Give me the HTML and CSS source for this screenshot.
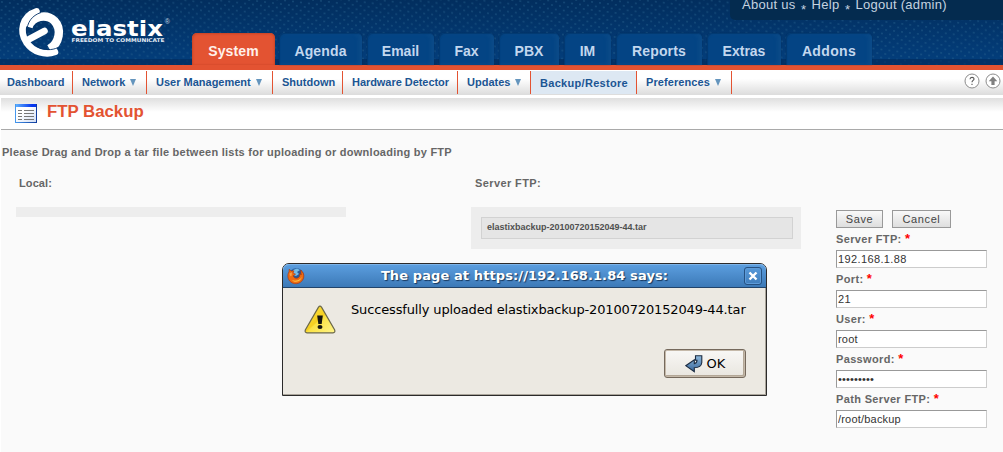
FILE: index.html
```html
<!DOCTYPE html>
<html lang="en">
<head>
<meta charset="utf-8">
<title>Elastix - FTP Backup</title>
<link rel="stylesheet" href="styles.css">
</head>
<body>
<header class="header">
  <svg class="dots" width="1003" height="65" aria-hidden="true">
    <defs>
      <pattern id="dot-a" width="8" height="8" patternUnits="userSpaceOnUse" patternTransform="rotate(7) skewX(5)">
        <rect x="1" y="1" width="2" height="1.5" fill="#2a6590"/>
        <rect x="5" y="5" width="2" height="1.5" fill="#2a6590"/>
      </pattern>
    </defs>
    <rect width="1003" height="65" fill="url(#dot-a)" opacity=".45"/>
    <rect y="59" width="1003" height="6" fill="#022b5c" opacity=".65"/>
  </svg>
  <svg class="logo" width="160" height="60" viewBox="14 0 160 60" role="img" aria-label="elastix">
    <path d="M28.5 27C32 15.500 47 13.500 54.500 21C62 29 59.500 43 49.500 49" fill="none" stroke="#fff" stroke-width="8.500"/>
    <path d="M36.500 11.300C22 16 19 32 26.500 42.500C33 52 45 55.500 55 52" fill="none" stroke="#fff" stroke-width="6.600" stroke-linecap="round"/>
    <path d="M41 12.500C32 15.500 27 22 26.500 33" fill="none" stroke="#043268" stroke-width=".9"/>
    <path d="M58 47.500C52 50.500 44 50.500 37 46.500" fill="none" stroke="#043268" stroke-width=".9"/>
    <path d="M29.500 39L44.500 31" stroke="#fff" stroke-width="6.600" stroke-linecap="round"/>
    <text class="logo-name" x="71" y="36" textLength="92" lengthAdjust="spacingAndGlyphs">elastix</text>
    <text class="logo-tag" x="71.5" y="41.8" textLength="93" lengthAdjust="spacingAndGlyphs">FREEDOM TO COMMUNICATE</text>
    <text class="logo-mark" x="164.8" y="24">®</text>
  </svg>
  <nav class="tabs">
    <a class="tab tab-system active">System</a>
    <a class="tab tab-agenda">Agenda</a>
    <a class="tab tab-email">Email</a>
    <a class="tab tab-fax">Fax</a>
    <a class="tab tab-pbx">PBX</a>
    <a class="tab tab-im">IM</a>
    <a class="tab tab-reports">Reports</a>
    <a class="tab tab-extras">Extras</a>
    <a class="tab tab-addons">Addons</a>
  </nav>
  <div class="account"><a>About us</a><i>*</i><a>Help</a><i>*</i><a>Logout (admin)</a></div>
</header>
<nav class="submenu">
  <a class="sub sub-dashboard">Dashboard</a>
  <a class="sub sub-network">Network<b></b></a>
  <a class="sub sub-users">User Management<b></b></a>
  <a class="sub sub-shutdown">Shutdown</a>
  <a class="sub sub-hardware">Hardware Detector</a>
  <a class="sub sub-updates">Updates<b></b></a>
  <a class="sub sub-backup current">Backup/Restore</a>
  <a class="sub sub-prefs">Preferences<b></b></a>
  <span class="tools">
    <svg width="16" height="16" viewBox="0 0 16 16"><circle cx="8" cy="8" r="7" fill="#fff" stroke="#8c8c8c"/><path d="M6 6.2C6 3.8 10 3.8 10 6C10 7.4 8 7.5 8 9.3M8 10.7V12" fill="none" stroke="#555" stroke-width="1.1"/></svg>
    <svg width="16" height="16" viewBox="0 0 16 16"><circle cx="8" cy="8" r="7" fill="#fff" stroke="#8c8c8c"/><path d="M8 3.5L12.3 8.3H9.6V12H6.4V8.3H3.7Z" fill="#808080"/></svg>
  </span>
</nav>
<main class="page">
  <h1 class="title">
    <svg width="22" height="19" viewBox="0 0 22 19">
      <defs>
        <linearGradient id="bar"><stop offset="0" stop-color="#5fb0ff"/><stop offset=".8" stop-color="#0636ee"/></linearGradient>
        <linearGradient id="frame"><stop offset="0" stop-color="#4698ee"/><stop offset="1" stop-color="#103c9c"/></linearGradient>
        <linearGradient id="sheet" x2="1" y2="1"><stop offset=".4" stop-color="#fff"/><stop offset="1" stop-color="#cfdcf3"/></linearGradient>
      </defs>
      <rect x=".5" y=".5" width="21" height="18" fill="url(#sheet)" stroke="url(#frame)"/>
      <rect x="1" y="0" width="20" height="3" fill="url(#bar)"/>
      <path d="M3 6.5H7M3 9.5H7M3 12.5H7M3 15.5H7M9 6.5H19M9 9.5H19M9 12.5H19M9 15.5H19" stroke="#777"/>
    </svg>
    <span>FTP Backup</span>
  </h1>
  <p class="hint">Please Drag and Drop a tar file between lists for uploading or downloading by FTP</p>
  <div class="columns">
    <section class="col col-local">
      <h2 class="label">Local:</h2>
      <div class="list"></div>
    </section>
    <section class="col col-server">
      <h2 class="label">Server FTP:</h2>
      <div class="list"><div class="file"><span>elastixbackup-20100720152049-44.tar</span></div></div>
    </section>
    <form class="form">
      <div class="buttons"><button type="button" class="btn btn-save">Save</button><button type="button" class="btn btn-cancel">Cancel</button></div>
      <label class="field"><span class="name">Server FTP: <em>*</em></span><input value="192.168.1.88"></label>
      <label class="field"><span class="name">Port: <em>*</em></span><input value="21"></label>
      <label class="field"><span class="name">User: <em>*</em></span><input class="tight" value="root"></label>
      <label class="field"><span class="name">Password: <em>*</em></span><input class="secret" value="•••••••••"></label>
      <label class="field"><span class="name">Path Server FTP: <em>*</em></span><input class="tight" value="/root/backup"></label>
    </form>
  </div>
</main>
<div class="dialog">
  <div class="dialog-bar">
    <svg width="18" height="18" viewBox="0 0 18 18">
      <circle cx="9.3" cy="8.7" r="7.5" fill="#275999"/>
      <path d="M6 3L10 1.5L13 3L10 5L12 7L9 9L6 8Z" fill="#75bde7"/>
      <path d="M2.2 2.2L4.2 4.1L7 3.8L6 6L8.5 7.2L6.2 8.7C6.6 11.5 10.5 12.3 12.5 9.5L12.9 6.5L14.2 8L13.8 3.2C16.5 5.2 17.3 8 16.6 10.8C15 16.5 8.5 18.3 4 15.2C.4 12.5.1 7.7 2 4.8Z" fill="#ed6b12" stroke="#ae3106" stroke-width=".6"/>
      <path d="M15.500 7C15.500 12 10.500 14.800 5 13.200C9 16.500 15 14.500 15.500 7Z" fill="#ffc542"/>
      <path d="M2.5 6.5L5 5.2L4.5 9C3.5 9.5 2.7 8.5 2.5 6.5Z" fill="#f5a34a"/>
    </svg>
    <span class="dialog-title">The page at https://192.168.1.84 says:</span>
    <span class="close"><svg width="12" height="12" viewBox="0 0 12 12"><path d="M2.500 2.500L9.500 9.500M9.500 2.500L2.500 9.500" stroke="#fff" stroke-width="2.400"/></svg></span>
  </div>
  <div class="dialog-body">
    <svg width="32" height="29" viewBox="0 0 32 29">
      <defs><linearGradient id="warn" x2="1" y2="1"><stop offset="0" stop-color="#ffe84c"/><stop offset=".48" stop-color="#f5cf20"/><stop offset=".52" stop-color="#fbe244"/><stop offset="1" stop-color="#fff58c"/></linearGradient></defs>
      <path d="M14.5 2.2Q16 .2 17.5 2.2L30.7 25Q31.5 27.6 29 27.8H3Q.5 27.6 1.3 25Z" fill="url(#warn)" stroke="#6b6848" stroke-width="1.2"/>
      <path d="M13.2 10.500H18.8L17.700 19H14.300Z" fill="#151510"/><ellipse cx="16" cy="22" rx="2.5" ry="2" fill="#151510"/>
    </svg>
    <span class="message">Successfully uploaded elastixbackup-20100720152049-44.tar</span>
    <button type="button" class="ok">
      <svg width="18" height="18" viewBox="0 0 18 18">
        <defs><linearGradient id="enter" x2="0" y2="1"><stop offset="0" stop-color="#8fb9dc"/><stop offset="1" stop-color="#36659a"/></linearGradient></defs>
        <path d="M10.500 .700H16.800V7.500Q16.300 12.700 9.300 12.700V16.800L.8 10.700L9.300 4.800V8.700Q12 8.300 12 5.200H10.500Z" fill="url(#enter)" stroke="#1c2c42" stroke-width="1.1"/>
      </svg>
      <span>OK</span>
    </button>
  </div>
</div>
</body>
</html>
```

FILE: styles.css
```css
* { box-sizing: border-box; }
body {
  margin: 0;
  width: 1003px;
  height: 452px;
  overflow: hidden;
  background: #fff;
  font-family: "Liberation Sans", Arial, sans-serif;
  position: relative;
}

/* Header */
.header {
  position: relative;
  height: 70px;
  display: flex;
  align-items: flex-start;
  background: linear-gradient(#022e5e, #033d7a 59px);
  border-bottom: 5px solid #e35332;
}
.dots { position: absolute; left: 0; top: 0; }
.logo { position: relative; margin-left: 14px; width: 160px; flex: none; }
.logo-name { font: bold 20.5px "DejaVu Sans", sans-serif; fill: #fff; }
.logo-tag { font: bold 5px "DejaVu Sans", sans-serif; fill: #e4ecf5; }
.logo-mark { font: 7px "Liberation Sans", sans-serif; fill: #c5d3e4; }
.tabs { position: relative; display: flex; gap: 5px; margin: 33px 0 0 18px; }
.tab {
  height: 32px;
  border-radius: 5px 5px 0 0;
  background: #044484;
  box-shadow: inset 1px 1px 1px #033970, inset -3px 0 4px #0c4b88, 0 0 1px #02264e;
  color: #c3d7ee;
  font-weight: bold;
  font-size: 14px;
  line-height: 36px;
  text-align: center;
}
.tab.active { background: #e35332; color: #fff0ea; box-shadow: inset 1px 1px 2px #c94627, inset -1px 0 2px #c94627; }
.tab-system { width: 83px; letter-spacing: .1px; margin-right: -1px; }
.tab-agenda { width: 83px; letter-spacing: .15px; }
.tab-email { width: 67px; }
.tab-fax { width: 55px; }
.tab-pbx { width: 60px; }
.tab-im { width: 47px; }
.tab-reports { width: 86px; letter-spacing: .15px; }
.tab-extras { width: 74px; }
.tab-addons { width: 86px; letter-spacing: .35px; }
.account {
  position: absolute;
  right: 0;
  top: 0;
  width: 273px;
  height: 20px;
  padding-left: 12px;
  border-bottom-left-radius: 5px;
  background: #042b4f;
  color: #c5d3e0;
  font-size: 13px;
  line-height: 15px;
  display: flex;
}
.account a { position: relative; top: -3px; white-space: nowrap; letter-spacing: .28px; }
.account i { width: 16px; text-align: center; font-style: normal; line-height: 20px; }

/* Second-level menu */
.submenu {
  height: 25px;
  padding-top: 1px;
  display: flex;
  background: linear-gradient(#fff 35%, #dcdcdc);
}
.sub {
  height: 23px;
  padding-left: 9px;
  border-right: 1px solid #e35332;
  color: #1b5593;
  font-size: 11px;
  font-weight: bold;
  line-height: 22px;
  white-space: nowrap;
}
.sub b {
  display: inline-block;
  margin-left: 5px;
  border: solid transparent;
  border-width: 7px 3.5px 0;
  border-top-color: #6495bd;
}
.sub-dashboard { width: 73px; padding-left: 7px; }
.sub-network { width: 74px; }
.sub-users { width: 126px; }
.sub-shutdown { width: 70px; }
.sub-hardware { width: 115px; letter-spacing: -.05px; }
.sub-updates { width: 73px; }
.sub-backup { width: 106px; letter-spacing: .3px; }
.sub-prefs { width: 95px; letter-spacing: .08px; }
.current { background: #dde8f3; background-clip: padding-box; line-height: 24px; }
.tools { margin-left: auto; padding: 2px 2px 0 0; display: flex; gap: 5px; }

/* Page */
.page { margin: 3px 0 0 1px; height: 354px; background: #fafafa; }
.title {
  margin: 0;
  height: 32px;
  padding: 0 14px 1px;
  display: flex;
  align-items: center;
  gap: 10px;
  border-bottom: 1px solid #a9a9a9;
  background: linear-gradient(#dfdfdf, #fff 14px);
  color: #e35332;
  font-size: 16.8px;
}
.title svg { flex: none; }
.title span { margin-top: -2px; }
.hint { margin: 0; padding: 15px 0 0 1px; font-size: 11px; line-height: 14px; font-weight: bold; color: #666; letter-spacing: .25px; white-space: nowrap; }
.columns { display: flex; }
.label { margin: 0 0 17px 3px; font-size: 11px; line-height: 14px; color: #666; letter-spacing: .3px; }
.col { width: 330px; padding-top: 17px; }
.col-local { margin-left: 15px; }
.col-local .label { letter-spacing: .1px; }
.col-server { margin-left: 125px; }
.col-server .label { margin-left: 4px; letter-spacing: .4px; }
.list { padding: 10px 8px 10px 10px; min-height: 10px; background: #ededed; }
.col-local .list { height: 10px; padding: 0; }
.file { height: 22px; padding-left: 5px; border: 1px solid #d2d2d2; background: #e5e5e5; color: #505050; font-size: 9px; font-weight: bold; line-height: 19px; }
.form { margin: 51px 0 0 35px; width: 151px; }
.buttons { display: flex; gap: 9px; height: 18px; margin-bottom: 2px; }
.btn {
  height: 18px;
  padding: 0;
  border: 1px solid #999;
  background: linear-gradient(#f9f9f9, #dedede);
  color: #444;
  font: 11px/16px "Liberation Sans", Arial, sans-serif;
  letter-spacing: .6px;
}
.btn-save { width: 47px; }
.btn-cancel { width: 59px; }
.field { display: block; height: 40px; }
.name { display: block; height: 20px; font-size: 11px; line-height: 19px; font-weight: bold; color: #666; letter-spacing: .35px; }
.name em { color: #f00; font-style: normal; font-size: 13px; line-height: 12px; }
.field input {
  display: block;
  width: 151px;
  height: 18px;
  padding: 0 1px;
  border: 1px solid #999;
  border-right-color: #ccc;
  border-bottom-color: #ccc;
  background: #fff;
  color: #333;
  font: 11px "Liberation Sans", Arial, sans-serif;
  letter-spacing: .38px;
}
.field .tight { letter-spacing: .2px; }
.field .secret { letter-spacing: .15px; }

/* Message window laid over the page */
.dialog {
  position: absolute;
  left: 282px;
  top: 263px;
  width: 485px;
  height: 133px;
  border: 1px solid #2b2a2a;
  border-radius: 7px 7px 0 0;
  background: #ece9e2;
  font-family: "DejaVu Sans", sans-serif;
  font-size: 13px;
  color: #000;
  box-shadow: inset -1px -1px #aaa59b;
}
.dialog-bar {
  height: 24px;
  padding: 0 4px 0 4px;
  display: flex;
  align-items: center;
  border-radius: 6px 6px 0 0;
  border-bottom: 1px solid #21446b;
  background: linear-gradient(#5c9fe0, #3c79b7);
  box-shadow: inset 0 1px #7db3e8;
}
.dialog-title { flex: 1; text-align: center; color: #fff; font-weight: bold; letter-spacing: .1px; text-shadow: 1px 1px 1px #16365c; white-space: nowrap; }
.close { width: 18px; height: 18px; border: 1px solid #255182; border-radius: 3px; display: grid; place-items: center; box-shadow: inset 0 0 0 1px #5e9bd8; }
.dialog-body { display: grid; grid-template-columns: 47px minmax(0, 1fr); padding: 17px 20px 0 21px; }
.message { line-height: 16px; margin-top: -3px; white-space: nowrap; letter-spacing: -.145px; }
.ok {
  grid-column: 2;
  justify-self: end;
  width: 82px;
  height: 29px;
  margin-top: 15px;
  padding: 0;
  display: flex;
  align-items: center;
  justify-content: center;
  gap: 4px;
  border: 1px solid #75695c;
  border-radius: 3px;
  background: linear-gradient(#f8f7f5, #e9e6df);
  box-shadow: inset 0 0 0 1px #c5b9a9, inset -1px -1px 0 1px #b3a797;
  color: #000;
  font: 13px "DejaVu Sans", sans-serif;
}
```
